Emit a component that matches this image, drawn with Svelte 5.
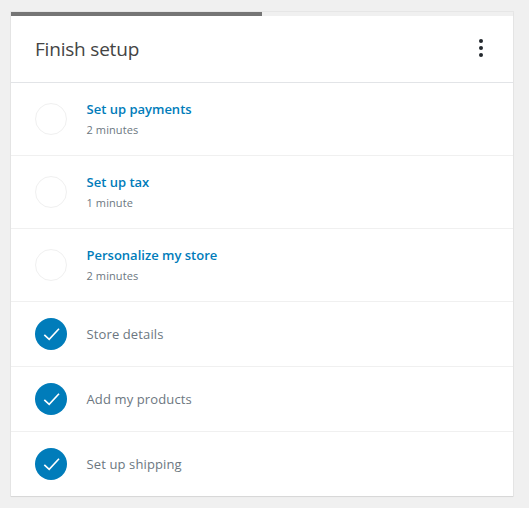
<svelte:options runes={true} />

<script lang="ts">
  interface Task {
    title: string;
    time?: string;
    done: boolean;
  }

  const tasks: Task[] = [
    { title: "Set up payments", time: "2 minutes", done: false },
    { title: "Set up tax", time: "1 minute", done: false },
    { title: "Personalize my store", time: "2 minutes", done: false },
    { title: "Store details", done: true },
    { title: "Add my products", done: true },
    { title: "Set up shipping", done: true }
  ];
  const progress = 50;
</script>

<div class="page">
  <section class="card">
    <div class="progress">
      <div class="progress-fill" style={`width: ${progress}%`}></div>
    </div>

    <header class="card-header">
      <h2>Finish setup</h2>
      <span class="menu" aria-label="Task list options">
        <i></i><i></i><i></i>
      </span>
    </header>

    <ul class="tasks">
      {#each tasks as task (task.title)}
        <li class="task" class:done={task.done}>
          <span class="status">
            {#if task.done}
              <svg viewBox="0 0 24 24" width="24" height="24" aria-hidden="true">
                <path d="M5.3 12.8 L10.2 17.4 L20 6.8" />
              </svg>
            {/if}
          </span>
          <div class="task-text">
            <div class="task-title">{task.title}</div>
            {#if task.time}
              <div class="task-time">{task.time}</div>
            {/if}
          </div>
        </li>
      {/each}
    </ul>
  </section>
</div>

<style>
  :global(body) {
    background: #f0f0f0;
    font-family: "Open Sans", "Noto Sans", sans-serif;
  }

  .page {
    padding: 12px 16px 12px 11px;
    height: 508px;
    box-sizing: border-box;
  }

  .card {
    background: #fff;
    box-shadow: 0 0 0 1px rgba(0, 0, 0, 0.04), 0 1px 1px rgba(0, 0, 0, 0.06);
    height: 484px;
  }

  .progress {
    height: 4px;
    background: #f0f0f0;
  }

  .progress-fill {
    height: 100%;
    background: #757575;
  }

  .card-header {
    height: 67px;
    box-sizing: border-box;
    display: flex;
    align-items: center;
    justify-content: space-between;
    padding: 0 30px 1px 24px;
    border-bottom: 1px solid #e2e4e7;
  }

  h2 {
    margin: 0;
    font-size: 19px;
    font-weight: 400;
    letter-spacing: -0.2px;
    color: #444;
  }

  .menu {
    display: flex;
    flex-direction: column;
    gap: 3px;
    margin-bottom: 1px;
  }

  .menu i {
    width: 4px;
    height: 4px;
    border-radius: 50%;
    background: #23282d;
  }

  .tasks {
    list-style: none;
    margin: 0;
    padding: 0;
  }

  .task {
    height: 73px;
    box-sizing: border-box;
    display: flex;
    align-items: center;
    padding: 0 24px;
    gap: 19.5px;
    border-bottom: 1px solid #f0f0f0;
  }

  .task.done {
    height: 65px;
  }

  .task:last-child {
    height: 64px;
    border-bottom: 0;
  }

  .status {
    width: 32px;
    height: 32px;
    box-sizing: border-box;
    border-radius: 50%;
    border: 1px solid #f0f0f0;
    display: flex;
    align-items: center;
    justify-content: center;
    flex-shrink: 0;
  }

  .done .status {
    background: #007cba;
    border: 0;
  }

  .status svg {
    fill: none;
    stroke: #fff;
    stroke-width: 1.6;
  }

  .task-title {
    font-size: 13px;
    line-height: 20px;
    font-weight: 600;
    color: #007cba;
  }

  .done .task-title {
    font-weight: 400;
    letter-spacing: 0.12px;
    color: #6c7781;
  }

  .task-time {
    font-size: 11px;
    line-height: 20px;
    margin-top: 1px;
    letter-spacing: 0.1px;
    color: #6c7781;
  }
</style>
